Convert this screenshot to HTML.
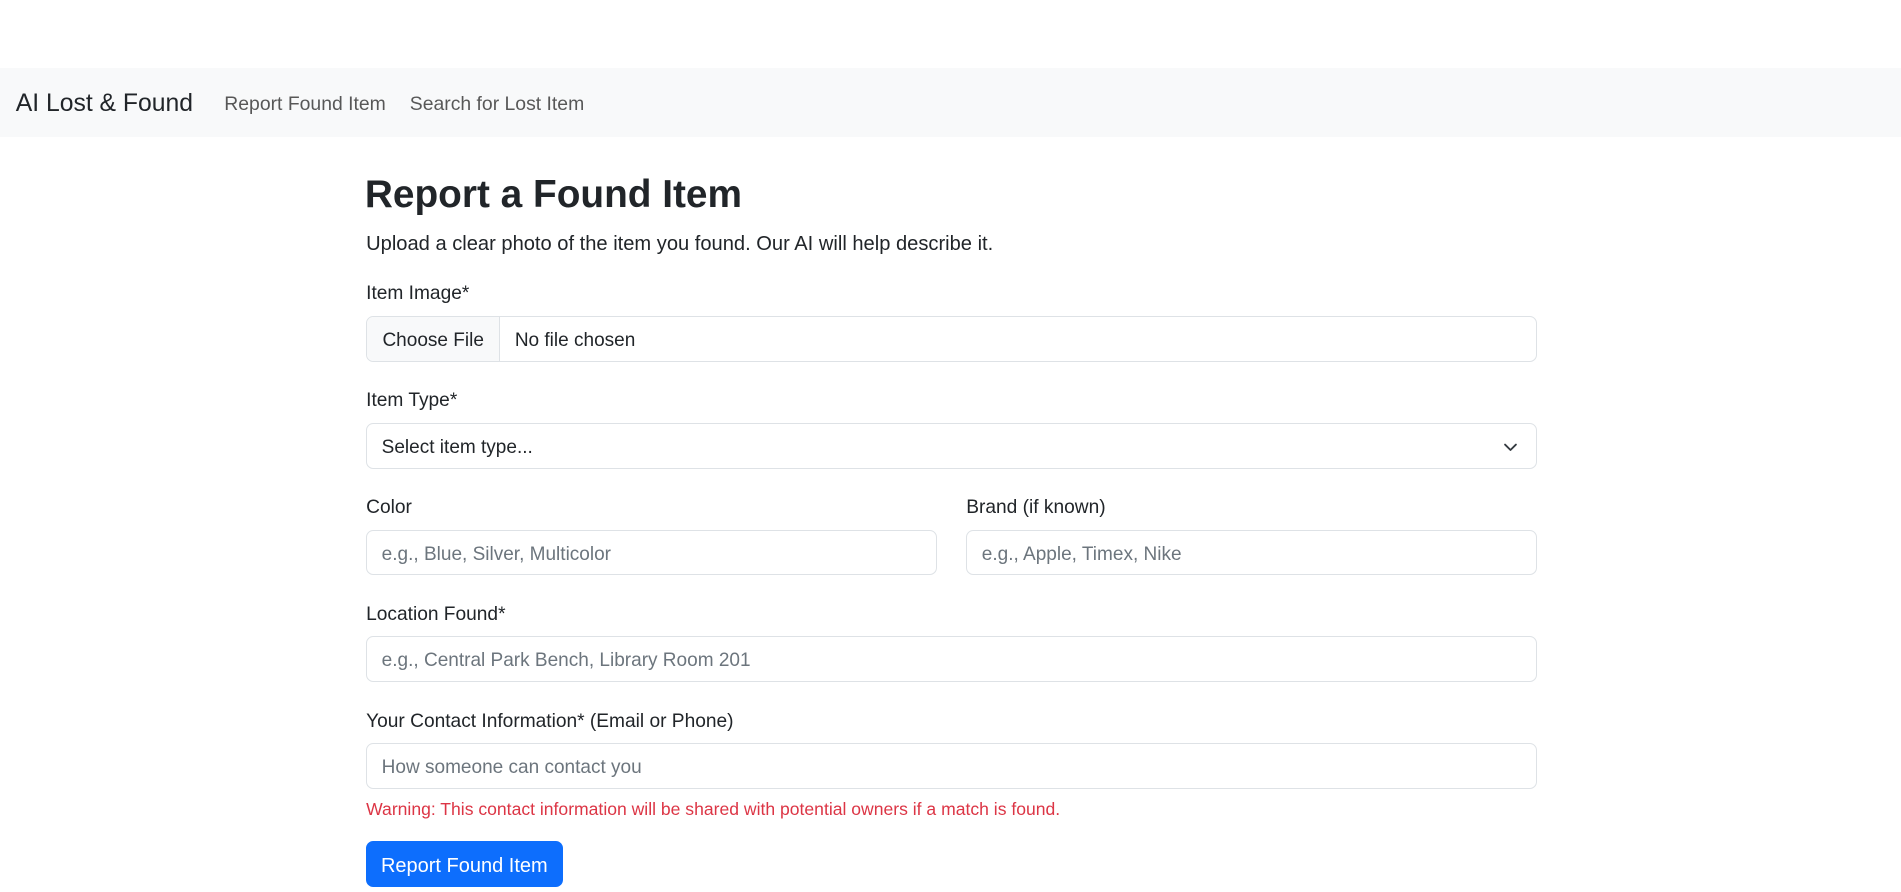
<!DOCTYPE html>
<html><head><meta charset="utf-8"><style>
html{zoom:1.21237}
body{margin:0;width:1568px;height:721px;overflow:hidden;background:#fff;font-family:"Liberation Sans",sans-serif;color:#212529;font-size:16px;position:relative}
.a{position:absolute;white-space:nowrap}
.nav{position:absolute;left:0;top:56px;width:1568px;height:57px;background:#f8f9fa}
.in{position:absolute;height:36px;border:1px solid #dee2e6;border-radius:6px;background:#fff;box-sizing:content-box;color:#6c757d;font-size:15.7px;line-height:39px;padding-left:12px}
.lbl{position:absolute;font-size:15.8px;line-height:20px}
</style></head><body>
<div class="nav">
<div class="a" style="left:13px;top:18px;font-size:20.4px;color:#212529">AI Lost &amp; Found</div>
<div class="a" style="left:185px;top:21px;font-size:16px;color:rgba(0,0,0,.65)">Report Found Item</div>
<div class="a" style="left:338px;top:21px;font-size:16px;color:rgba(0,0,0,.65)">Search for Lost Item</div>
</div>
<div class="a" style="left:301px;top:142px;font-size:32px;font-weight:bold;line-height:38px">Report a Found Item</div>
<div class="a" style="left:302px;top:191px;font-size:16.6px;line-height:20px">Upload a clear photo of the item you found. Our AI will help describe it.</div>
<div class="lbl" style="left:302px;top:233px">Item Image*</div>
<div class="in" style="left:302px;top:261px;width:964px;padding-left:0;color:#212529">
<span style="display:inline-block;width:109px;height:36px;background:#f8f9fa;border-right:1px solid #dee2e6;text-align:center;border-radius:6px 0 0 6px">Choose File</span><span style="margin-left:12px">No file chosen</span></div>
<div class="lbl" style="left:302px;top:321px">Item Type*</div>
<div class="in" style="left:302px;top:349px;width:952px;color:#212529">Select item type...
<svg style="position:absolute;right:14px;top:13px" width="14" height="12" viewBox="0 0 16 16"><path d="M2 5l6 6 6-6" fill="none" stroke="#343a40" stroke-width="2" stroke-linecap="round" stroke-linejoin="round"/></svg></div>
<div class="lbl" style="left:302px;top:409px">Color</div>
<div class="lbl" style="left:797px;top:409px">Brand (if known)</div>
<div class="in" style="left:302px;top:437px;width:457px">e.g., Blue, Silver, Multicolor</div>
<div class="in" style="left:797px;top:437px;width:457px">e.g., Apple, Timex, Nike</div>
<div class="lbl" style="left:302px;top:497px">Location Found*</div>
<div class="in" style="left:302px;top:525px;width:952px">e.g., Central Park Bench, Library Room 201</div>
<div class="lbl" style="left:302px;top:586px">Your Contact Information* (Email or Phone)</div>
<div class="in" style="left:302px;top:613px;width:952px">How someone can contact you</div>
<div class="a" style="left:302px;top:659px;font-size:14.5px;color:#dc3545">Warning: This contact information will be shared with potential owners if a match is found.</div>
<div class="a" style="left:302px;top:694px;width:162px;height:38px;background:#0d6efd;border-radius:6px;color:#fff;font-size:16.5px;line-height:42px;text-align:center">Report Found Item</div>
</body></html>
